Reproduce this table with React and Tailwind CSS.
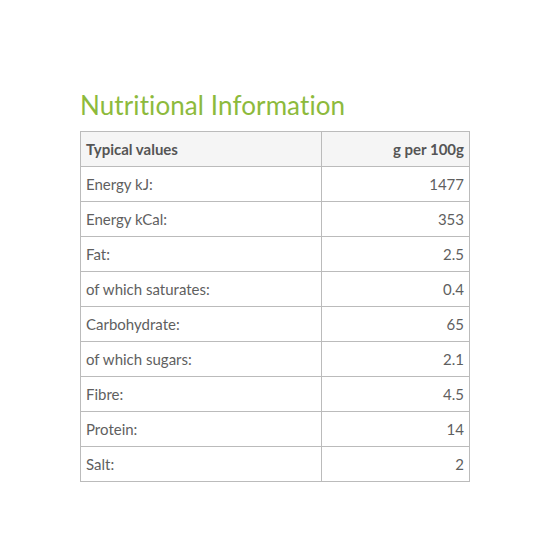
import React from 'react';

const rows = [
  ['Energy kJ:', '1477'],
  ['Energy kCal:', '353'],
  ['Fat:', '2.5'],
  ['of which saturates:', '0.4'],
  ['Carbohydrate:', '65'],
  ['of which sugars:', '2.1'],
  ['Fibre:', '4.5'],
  ['Protein:', '14'],
  ['Salt:', '2'],
];

const App = () => {
  return (
    <div className="min-h-screen bg-white pt-[88px] pl-[80px]" style={{ fontFamily: 'Lato, "Open Sans", sans-serif' }}>
      <h2 className="text-[26px] leading-[34px] text-[#8dba3c] font-normal tracking-[0.1px] mb-[9px]">
        Nutritional Information
      </h2>
      <table className="w-[390px] border-collapse text-[15px] text-[#5f5f5f]">
        <thead>
          <tr className="bg-[#f5f5f5]">
            <th className="h-[35px] w-[241px] border border-[#bbb] border-t-dotted text-left font-bold pl-[5px] pr-[6px] text-[#555]">
              Typical values
            </th>
            <th className="h-[35px] border border-[#bbb] border-t-dotted text-right font-bold px-[5px] text-[#555]">
              g per 100g
            </th>
          </tr>
        </thead>
        <tbody>
          {rows.map(([label, value]) => (
            <tr key={label}>
              <td className="h-[35px] border border-[#bbb] pl-[5px] pr-[6px] font-normal">{label}</td>
              <td className="h-[35px] border border-[#bbb] px-[5px] text-right font-normal">{value}</td>
            </tr>
          ))}
        </tbody>
      </table>
    </div>
  );
};

export default App;
